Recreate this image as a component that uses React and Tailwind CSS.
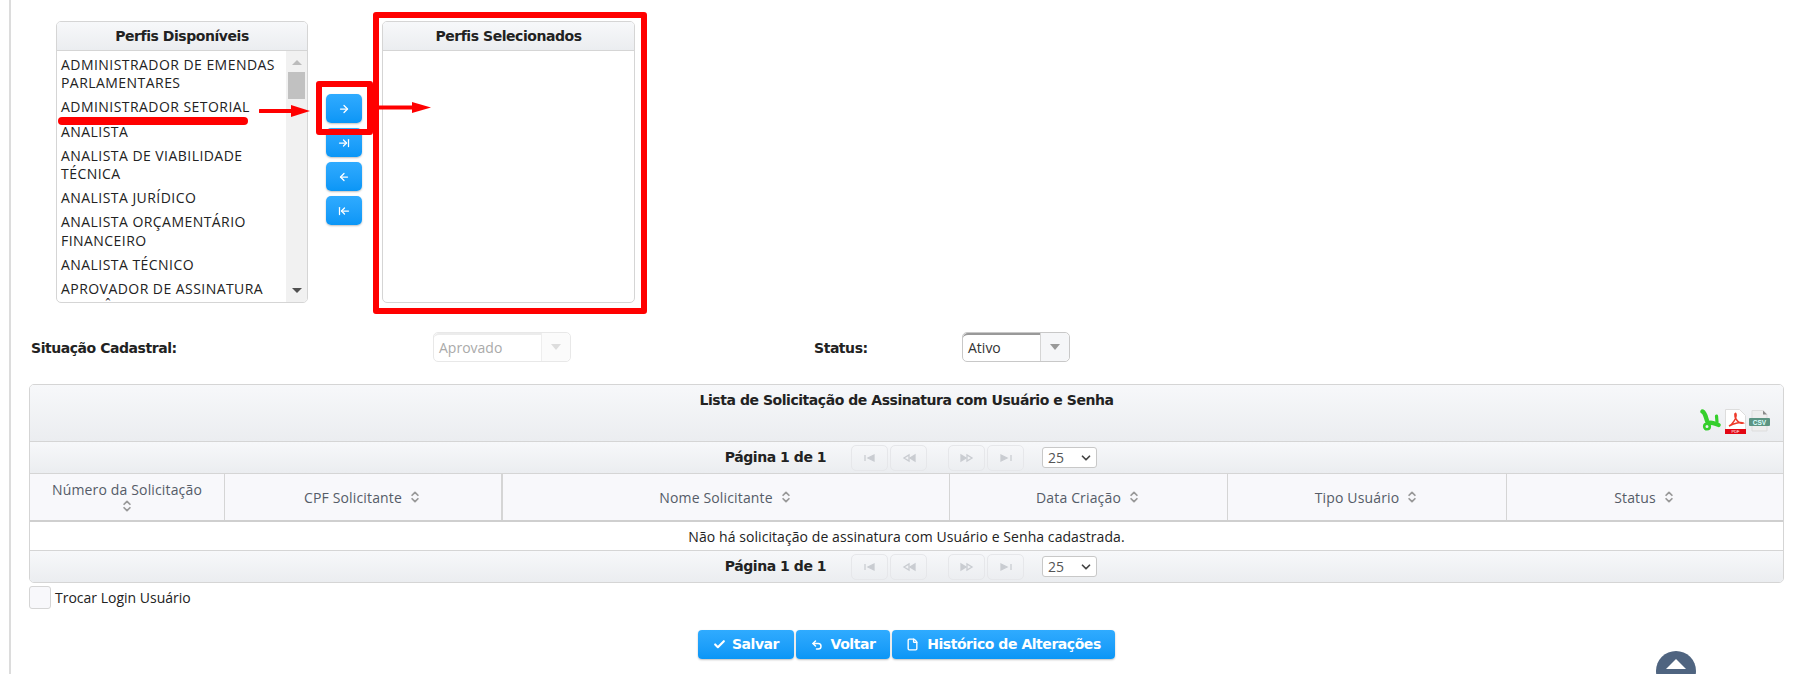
import { ArrowRight, ArrowRightToLine, ArrowLeft, ArrowLeftToLine, Check, ChevronDown, ChevronsUpDown, File, Undo2 } from 'lucide-react';

const perfis = [
  'ADMINISTRADOR DE EMENDAS PARLAMENTARES',
  'ADMINISTRADOR SETORIAL',
  'ANALISTA',
  'ANALISTA DE VIABILIDADE TÉCNICA',
  'ANALISTA JURÍDICO',
  'ANALISTA ORÇAMENTÁRIO FINANCEIRO',
  'ANALISTA TÉCNICO',
  'APROVADOR DE ASSINATURA ELETRÔNICA',
];

const colunas = [
  { nome: 'Número da Solicitação', quebra: true },
  { nome: 'CPF Solicitante', borda: 'border-r-2' },
  { nome: 'Nome Solicitante' },
  { nome: 'Data Criação' },
  { nome: 'Tipo Usuário' },
  { nome: 'Status', ultimo: true },
];

const regular = "font-['Open_Sans',sans-serif]";
const negrito = "font-['DejaVu_Sans',sans-serif] font-bold text-[14px] tracking-[-0.45px]";
const gradiente = 'bg-gradient-to-b from-[#f7f8fa] to-[#ebedf0]';
const azul = 'bg-gradient-to-b from-[#2fabff] to-[#0996f6] shadow-[0_1px_2px_rgba(0,0,0,0.25)]';

function CabecalhoLista({ children }) {
  return (
    <div className={`h-[29px] flex items-center justify-center border-b border-[#d5d5d5] ${gradiente} ${negrito} text-[#222]`}>
      {children}
    </div>
  );
}

function BotaoSeta({ icon: Icon }) {
  return (
    <button className={`w-9 h-[29px] rounded-[5px] flex items-center justify-center text-white ${azul}`}>
      <Icon size={12} strokeWidth={2.5} />
    </button>
  );
}

function Combo({ valor, disabled, className }) {
  return (
    <div className={`h-[30px] flex rounded-[5px] border ${disabled ? 'border-[#e8e8e8] text-[#aaa]' : 'border-[#c8c8c8] text-[#333]'} ${className}`}>
      <div className={`flex-1 flex items-center pl-[5px] pb-[2px] text-[14px] rounded-l-[5px] border-t-2 ${disabled ? 'border-[#ececec]' : 'border-[#999]'} ${regular}`}>
        {valor}
      </div>
      <div className={`w-[29px] flex items-center justify-center border-l rounded-r-[5px] ${disabled ? 'border-[#eee] bg-[#fbfbfb]' : 'border-[#d5d5d5] bg-[#f5f6f8]'}`}>
        <span className={`w-0 h-0 border-x-[5px] border-x-transparent border-t-[6px] ${disabled ? 'border-t-[#ddd]' : 'border-t-[#999]'}`} />
      </div>
    </div>
  );
}

function IconePager({ tipo }) {
  const paths = {
    first: <><path d="M4 4v6" /><path d="M13 4v6l-6-3z" fill="#c9ccd1" /></>,
    prev: <><path d="M9 4v6L4 7z" /><path d="M15 4v6l-5-3z" fill="#c9ccd1" /></>,
    next: <><path d="M3 4v6l5-3z" fill="#c9ccd1" /><path d="M9 4v6l5-3z" /></>,
    last: <><path d="M4 4v6l6-3z" fill="#c9ccd1" /><path d="M14 4v6" /></>,
  };
  return (
    <svg width="18" height="14" viewBox="0 0 18 14" fill="none" stroke="#c9ccd1" strokeWidth="1.3">
      {paths[tipo]}
    </svg>
  );
}

function BotaoPager({ tipo, className = '' }) {
  return (
    <span className={`w-[37px] h-[26px] rounded-[5px] border border-[#e6e7ea] flex items-center justify-center ${className}`}>
      <IconePager tipo={tipo} />
    </span>
  );
}

function Pager({ className = '' }) {
  return (
    <div className={`relative flex items-center border-[#d5d5d5] ${gradiente} ${className}`}>
      <div className="ml-[695px] w-[101px] flex justify-center whitespace-nowrap">
        <span className={`${negrito} text-[#222]`}>Página 1 de 1</span>
      </div>
      <BotaoPager tipo="first" className="ml-[25px]" />
      <BotaoPager tipo="prev" className="ml-[2px]" />
      <BotaoPager tipo="next" className="ml-[21px]" />
      <BotaoPager tipo="last" className="ml-[2px]" />
      <div className={`ml-[18px] w-[55px] h-[21px] rounded-[3px] border border-[#c8c8c8] bg-white flex items-center justify-between pl-[5px] pr-[3px] text-[14px] text-[#555] ${regular}`}>
        25
        <ChevronDown size={14} strokeWidth={3} className="text-[#444]" />
      </div>
    </div>
  );
}

function IconesExportar() {
  return (
    <div className="flex justify-end gap-[3px] pr-[13px] items-start">
      <svg width="22" height="23" viewBox="0 0 22 23" fill="none" stroke="#35cf2c" strokeLinecap="round" strokeLinejoin="round">
        <path d="M2.500 2.500c2 1 3 4 3.800 7s1.700 5 3 4.500 6 0 9.200 2" strokeWidth="4.400" />
        <path d="M16.500 7l.5 6" strokeWidth="3.200" />
        <circle cx="7" cy="17.500" r="2.800" strokeWidth="2.600" />
      </svg>
      <svg width="21" height="25" viewBox="0 0 21 25">
        <path d="M.5.500h14l6 6v17.500H.500z" fill="#fff" stroke="#ddd" />
        <path d="M4 17c3-1 8-8 7-12-1-2-2 1 0 5 2 3 4 5 7 4-2-1-9 0-14 3z" fill="none" stroke="#ee3a2a" strokeWidth="1.500" />
        <rect x="0" y="20" width="21" height="5" fill="#e30613" />
        <text x="10.500" y="24" textAnchor="middle" fontSize="4" fill="#fff" fontFamily="Liberation Sans">PDF</text>
      </svg>
      <svg width="21" height="22" viewBox="0 0 21 22" className="mt-[1px]">
        <path d="M3 .500h11l4 4V21H3z" fill="#eee" stroke="#ddd" />
        <path d="M14 .500v4h4z" fill="#888" />
        <rect x="0" y="8" width="21" height="8" rx="1" fill="#5c9482" />
        <text x="10.500" y="14.500" textAnchor="middle" fontSize="6.500" fontWeight="bold" fill="#dff" fontFamily="Liberation Sans">CSV</text>
      </svg>
    </div>
  );
}

function BotaoAcao({ icon: Icon, size = 14, stroke = 2.5, children, className }) {
  return (
    <button className={`h-[29px] rounded-[4px] flex items-center justify-center text-white ${azul} ${negrito} ${className}`}>
      <Icon size={size} strokeWidth={stroke} />
      {children}
    </button>
  );
}

// anotacoes em vermelho desenhadas por cima da tela
function Anotacoes() {
  return (
    <>
      <div className="absolute left-[58px] top-[117px] w-[190px] h-2 rounded-full bg-[#f00]" />
      <svg className="absolute left-[259px] top-[103px]" width="52" height="16" viewBox="0 0 52 16">
        <path d="M1 8h33" stroke="#f00" strokeWidth="4" strokeLinecap="round" />
        <path d="M32 2l19 6-19 6z" fill="#f00" />
      </svg>
      <div className="absolute left-[316px] top-[81px] w-[57px] h-[54px] rounded-[3px] border-[6px] border-[#f00]" />
      <div className="absolute left-[373px] top-[12px] w-[274px] h-[302px] rounded-[3px] border-[6px] border-[#f00]" />
      <svg className="absolute left-[378px] top-[100px]" width="54" height="16" viewBox="0 0 54 16">
        <path d="M0 7.500h36" stroke="#f00" strokeWidth="4" />
        <path d="M34 2l19 5.500-19 5.500z" fill="#f00" />
      </svg>
    </>
  );
}

export default function App() {
  return (
    <div className="relative h-[674px] overflow-hidden bg-white pl-[9px]">
      <div className="h-full border-l-2 border-[#dcdcdc] pl-[18px]">

        <div className="pt-[21px] pl-[27px] flex items-start">
          <div className="w-[252px] h-[282px] rounded-[5px] border border-[#d5d5d5] overflow-hidden flex flex-col">
            <CabecalhoLista>Perfis Disponíveis</CabecalhoLista>
            <div className="flex-1 flex min-h-0">
              <ul className={`flex-1 overflow-hidden pt-[2px] pl-[4px] pr-1 text-[14px] leading-[18.2px] tracking-[0.45px] text-[#222] ${regular}`}>
                {perfis.map(p => <li key={p} className="py-[3px]">{p}</li>)}
              </ul>
              <div className="w-[21px] bg-[#f1f1f1] flex flex-col items-center shrink-0">
                <span className="mt-[9px] w-0 h-0 border-x-[5px] border-x-transparent border-b-[5px] border-b-[#bbb]" />
                <span className="mt-[7px] w-[17px] h-[27px] bg-[#c1c1c1]" />
                <span className="mt-auto mb-[9px] w-0 h-0 border-x-[5px] border-x-transparent border-t-[5px] border-t-[#505050]" />
              </div>
            </div>
          </div>

          <div className="ml-[18px] pt-[73px] flex flex-col gap-[5px]">
            <BotaoSeta icon={ArrowRight} />
            <BotaoSeta icon={ArrowRightToLine} />
            <BotaoSeta icon={ArrowLeft} />
            <BotaoSeta icon={ArrowLeftToLine} />
          </div>

          <div className="ml-[20px] w-[253px] h-[282px] rounded-[5px] border border-[#d5d5d5] overflow-hidden">
            <CabecalhoLista>Perfis Selecionados</CabecalhoLista>
          </div>
        </div>

        <div className="mt-[29px] h-[30px] flex items-center">
          <span className={`ml-[2px] w-[402px] pt-[2px] text-[#222] ${negrito}`}>Situação Cadastral:</span>
          <Combo valor="Aprovado" disabled className="w-[138px]" />
          <span className={`ml-[243px] w-[148px] pt-[2px] text-[#222] ${negrito}`}>Status:</span>
          <Combo valor="Ativo" className="w-[108px]" />
        </div>

        <div className="mt-[22px] w-[1755px] rounded-[5px] border border-[#d5d5d5] overflow-hidden">
          <div className={`h-[57px] pt-[6px] border-b border-[#d5d5d5] ${gradiente}`}>
            <div className={`h-[18px] leading-[18px] text-center text-[#222] ${negrito}`}>
              Lista de Solicitação de Assinatura com Usuário e Senha
            </div>
            <IconesExportar />
          </div>

          <Pager className="h-[31px]" />

          <div className={`grid grid-cols-[195px_278px_447px_278px_279px_1fr] h-[49px] bg-[#f8f8fb] border-y border-b-2 border-y-[#d5d5d5] border-b-[#cfcfcf] text-[14px] tracking-[0.15px] text-[#555c68] ${regular}`}>
            {colunas.map(c => (
              <div key={c.nome}
                   className={`flex items-center justify-center text-center border-[#d5d5d5] ${c.ultimo ? '' : 'border-r'} ${c.borda || ''} ${c.quebra ? 'flex-col leading-[18px]' : 'gap-[6px]'}`}>
                {c.nome}
                <ChevronsUpDown size={14} strokeWidth={3} className="text-[#999] shrink-0" />
              </div>
            ))}
          </div>

          <div className={`h-[28px] flex items-center justify-center text-[14px] tracking-[0.07px] text-[#222] ${regular}`}>
            Não há solicitação de assinatura com Usuário e Senha cadastrada.
          </div>

          <Pager className="h-8 border-t" />
        </div>

        <div className="mt-[3px] flex items-center h-[23px]">
          <span className="w-[22px] h-[23px] rounded-[3px] border border-[#d5d5d5] bg-[#f8f8fb]" />
          <span className={`ml-[4px] text-[14px] text-[#222] ${regular}`}>Trocar Login Usuário</span>
        </div>

        <div className="mt-[21px] w-[1755px] flex justify-center gap-[2px]">
          <BotaoAcao icon={Check} stroke={4} size={13} className="w-24 gap-[6px]">Salvar</BotaoAcao>
          <BotaoAcao icon={Undo2} stroke={3} size={12} className="w-[94px] gap-[8px]">Voltar</BotaoAcao>
          <BotaoAcao icon={File} size={13} className="w-[223px] gap-[8px]">Histórico de Alterações</BotaoAcao>
        </div>
      </div>

      <Anotacoes />

      <div className="absolute left-[1656px] top-[651px] w-10 h-10 rounded-full bg-[#4f6480] flex justify-center pt-[8px]">
        <span className="w-0 h-0 border-x-[10px] border-x-transparent border-b-[10px] border-b-white" />
      </div>
    </div>
  );
}
